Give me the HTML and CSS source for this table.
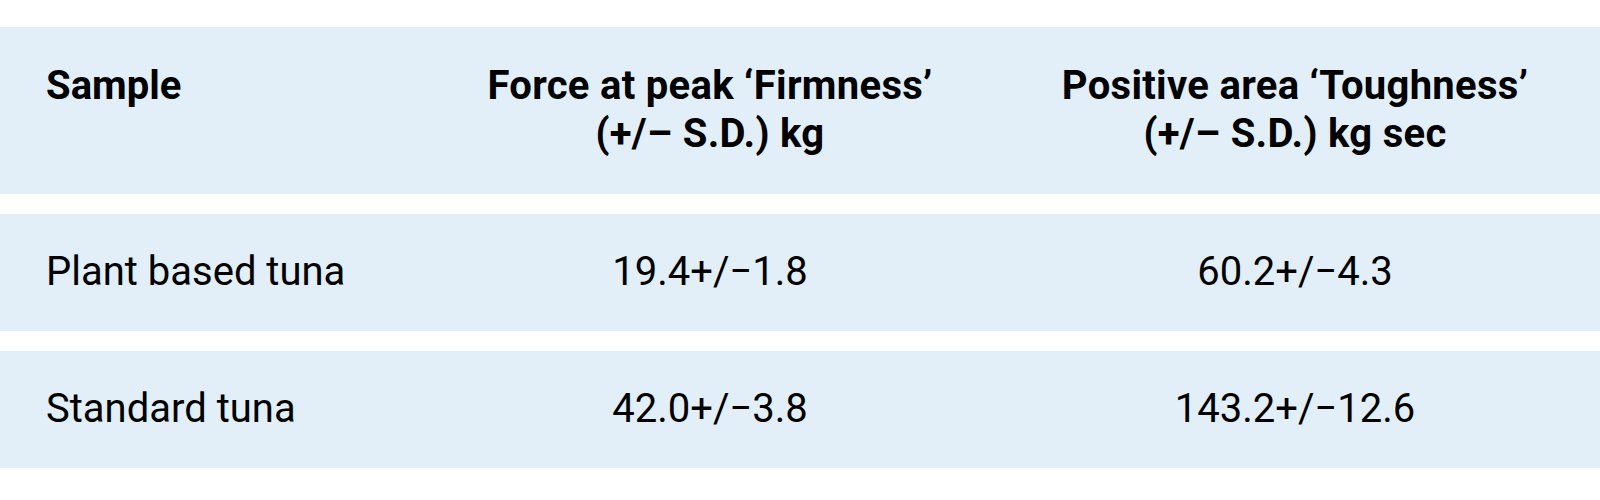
FILE: index.html
```html
<!DOCTYPE html>
<html lang="en">
<head>
<meta charset="utf-8">
<title>Texture analysis</title>
<link rel="stylesheet" href="styles.css">
</head>
<body>
<table class="results">
  <colgroup>
    <col class="col-sample">
    <col class="col-firm">
    <col class="col-tough">
  </colgroup>
  <thead>
    <tr class="head-row">
      <th class="cell-sample">Sample</th>
      <th class="cell-num">Force at peak ‘Firmness’<br>(+/– S.D.) kg</th>
      <th class="cell-num">Positive area ‘Toughness’<br>(+/– S.D.) kg sec</th>
    </tr>
  </thead>
  <tbody>
    <tr class="data-row">
      <td class="cell-sample">Plant based tuna</td>
      <td class="cell-num">19.4+/−1.8</td>
      <td class="cell-num">60.2+/−4.3</td>
    </tr>
    <tr class="data-row">
      <td class="cell-sample">Standard tuna</td>
      <td class="cell-num">42.0+/−3.8</td>
      <td class="cell-num">143.2+/−12.6</td>
    </tr>
  </tbody>
</table>
</body>
</html>
```

FILE: styles.css
```css
html, body {
  margin: 0;
  padding: 0;
  background: #ffffff;
}

body {
  font-family: Roboto, "Liberation Sans", Arial, sans-serif;
  color: #000000;
}

.results {
  width: 100%;
  border-collapse: separate;
  border-spacing: 0 20px;
  margin-top: 7px;
  table-layout: fixed;
  font-size: 40px;
  line-height: 48px;
}

.col-sample { width: 420px; }
.col-firm { width: 580px; }
.col-tough { width: auto; }

.results th,
.results td {
  background: #e2eff8;
  vertical-align: top;
}

.results th {
  font-weight: 700;
  padding: 35px 0 36px;
}

.results th.cell-num {
  letter-spacing: 0.3px;
}

.results td {
  font-weight: 400;
  padding: 34px 0 35px;
}

.results .cell-sample {
  text-align: left;
  padding-left: 46px;
}

.results .cell-num {
  text-align: center;
}

.results .cell-num:last-child {
  padding-right: 10px;
}
```
